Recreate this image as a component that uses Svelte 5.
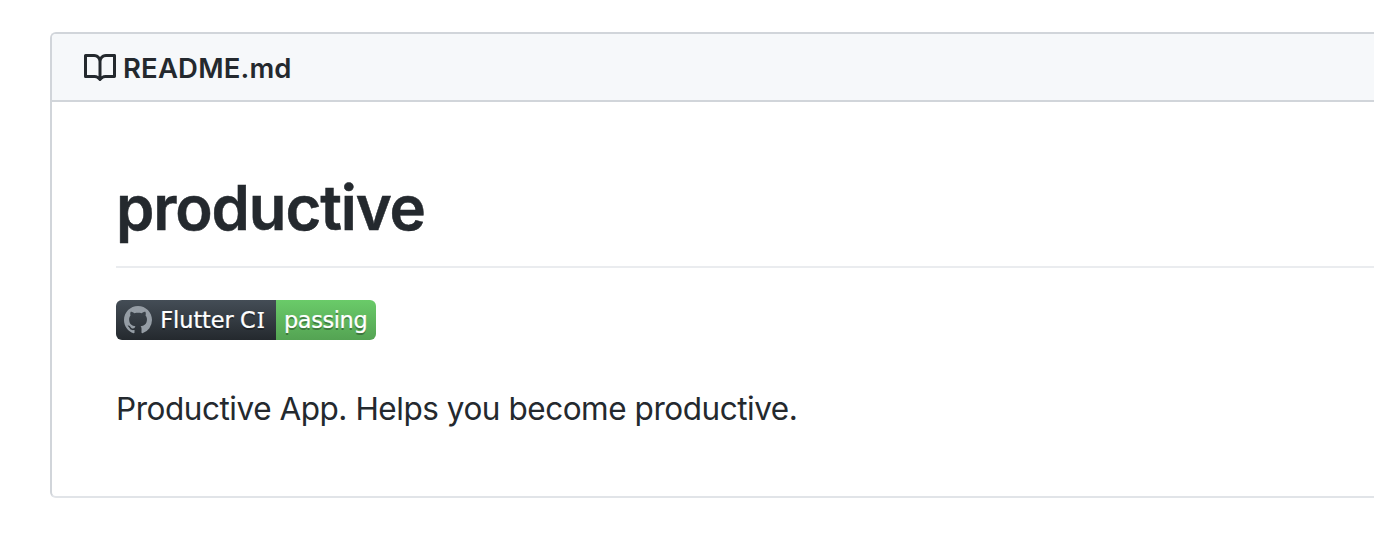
<script>
  const title = 'productive';
</script>

{#snippet labels(y)}
  <text {y}><tspan x="22.1" textLength="36.8">Flutter</tspan> <tspan x="62">C</tspan><tspan class="capital-i" x="70.5">I</tspan></text>
  <text x="84" {y} textLength="41.8">passing</text>
{/snippet}

<main>
  <article class="box">
    <header>
      <svg class="book" width="32" height="32" viewBox="0 0 16 16" fill="#24292e"><path fill-rule="evenodd" d="M0 1.75A.75.75 0 01.75 1h4.253c1.227 0 2.317.59 3 1.501A3.744 3.744 0 0111.006 1h4.245a.75.75 0 01.75.75v10.5a.75.75 0 01-.75.75h-4.507a2.25 2.25 0 00-1.591.659l-.622.621a.75.75 0 01-1.06 0l-.622-.621A2.25 2.25 0 005.258 13H.75a.75.75 0 01-.75-.75V1.75zm8.755 3a2.25 2.25 0 012.25-2.25H14.5v9h-3.757c-.71 0-1.4.201-1.992.572l.004-7.322zm-1.504 7.324l.004-5.073-.002-2.253A2.25 2.25 0 005.003 2.5H1.5v9h3.757a3.75 3.75 0 011.994.574z"/></svg>
      <span>README.md</span>
    </header>
    <div class="body">
      <h1><span>{title}</span></h1>
      <svg class="badge" width="260" height="40" viewBox="0 0 130 20">
        <defs>
          <linearGradient id="dark" x1="0" y1="0" x2="0" y2="1"><stop offset="0" stop-color="#444d56"/><stop offset="1" stop-color="#24292e"/></linearGradient>
          <linearGradient id="green" x1="0" y1="0" x2="0" y2="1"><stop offset="0" stop-color="#6acb69"/><stop offset="1" stop-color="#54a353"/></linearGradient>
        </defs>
        <path fill="url(#dark)" d="M3 0h77v20H3a3 3 0 0 1-3-3V3a3 3 0 0 1 3-3z"/>
        <path fill="url(#green)" d="M80 0h47a3 3 0 0 1 3 3v14a3 3 0 0 1-3 3H80z"/>
        <path fill="#959da5" transform="translate(4 3) scale(.875)" fill-rule="evenodd" d="M8 0C3.58 0 0 3.58 0 8c0 3.54 2.29 6.53 5.47 7.59.4.07.55-.17.55-.38 0-.19-.01-.82-.01-1.49-2.01.37-2.53-.49-2.69-.94-.09-.23-.48-.94-.82-1.13-.28-.15-.68-.52-.01-.53.63-.01 1.08.58 1.23.82.72 1.21 1.87.87 2.33.66.07-.52.28-.87.51-1.07-1.78-.2-3.64-.89-3.64-3.95 0-.87.31-1.59.82-2.15-.08-.2-.36-1.02.08-2.12 0 0 .67-.21 2.2.82.64-.18 1.32-.27 2-.27.68 0 1.36.09 2 .27 1.53-1.04 2.2-.82 2.2-.82.44 1.1.16 1.92.08 2.12.51.56.82 1.27.82 2.15 0 3.07-1.87 3.75-3.65 3.95.29.25.54.73.54 1.48 0 1.07-.01 1.93-.01 2.2 0 .21.15.46.55.38A8.013 8.013 0 0016 8c0-4.42-3.58-8-8-8z"/>
        <g class="shade">{@render labels(15)}</g>
        <g class="label">{@render labels(14)}</g>
      </svg>
      <p><span>Productive App. Helps you become productive.</span></p>
    </div>
  </article>
</main>

<style>
  :global(body) { margin: 0; background: #fff; overflow: hidden; }
  main { height: 544px; box-sizing: border-box; padding: 32px 0 0 50px; overflow: hidden; font-family: Inter, sans-serif; color: #24292e; }
  .box { box-sizing: border-box; height: 466px; border: 2px solid #e1e4e8; border-color: #d1d5da #d1d5da #e1e4e8; border-right: 0; border-radius: 6px 0 0 6px; overflow: hidden; }
  header { height: 66px; box-sizing: content-box; display: flex; align-items: center; gap: 7px; padding-left: 32px; background: #f6f8fa; border-bottom: 2px solid #d1d5da; font-size: 27.5px; font-weight: 600; letter-spacing: .17px; }
  header .book { margin-top: 2px; }
  header span { padding-top: 2px; }
  .body { padding: 64px 0 0 64px; }
  h1 { margin: 0; height: 102px; box-sizing: border-box; padding-top: 4px; border-bottom: 2px solid #eaecef; font-size: 61.5px; line-height: 76px; font-weight: 600; letter-spacing: -1.1px; -webkit-text-stroke: .5px #24292e; }
  .badge { display: block; margin-top: 32px; font: 11.2px "DejaVu Sans", sans-serif; }
  .capital-i { font-family: "Noto Sans", sans-serif; }
  .shade { fill: #010101; opacity: .3; }
  .label { fill: #fff; stroke: #fff; stroke-width: .12; }
  p { margin: 45px 0 0; font-size: 31.5px; line-height: 48px; letter-spacing: -.46px; }
</style>
